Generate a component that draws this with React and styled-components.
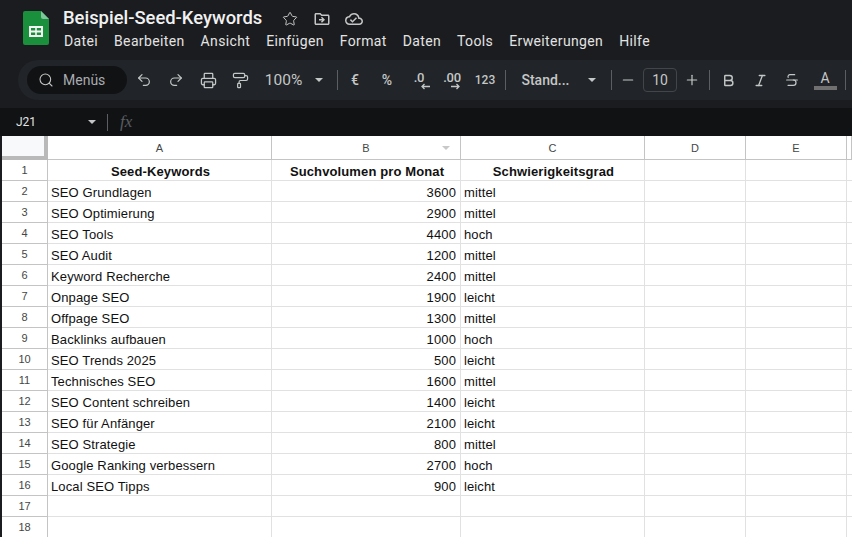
import React from 'react';
import styled, { createGlobalStyle } from 'styled-components';
import { MdOutlineDriveFileMove, MdOutlineCloudDone } from 'react-icons/md';
import {
	Star,
	Undo2,
	Redo2,
	Printer,
	PaintRoller,
	Search,
	Plus,
	Minus,
	Bold,
	Italic,
	Strikethrough,
} from 'lucide-react';

const GlobalStyle = createGlobalStyle`
	html, body {
		margin: 0;
		height: 100%;
		overflow: hidden;
		background: #1b1c1f;
	}
`;

const Page = styled.div`
	width: 852px;
	height: 537px;
	overflow: hidden;
	display: flex;
	flex-direction: column;
	background: #1b1c1f;
	font-family: Roboto, "Liberation Sans", sans-serif;
	color: #e3e3e3;
`;

const Header = styled.div`
	height: 60px;
	display: flex;
	flex-shrink: 0;
	padding-left: 23px;
	box-sizing: border-box;
`;

const Logo = styled.svg`
	width: 26px;
	height: 34px;
	margin-top: 11px;
`;

const HeaderText = styled.div`
	margin-left: 14px;
	display: flex;
	flex-direction: column;
`;

const TitleRow = styled.div`
	height: 24px;
	margin-top: 5px;
	display: flex;
	align-items: center;
`;

const Title = styled.div`
	font-size: 18.4px;
	font-weight: 500;
	color: #f1f1f1;
	width: 211px;
	white-space: nowrap;
`;

const TitleIcon = styled.span`
	width: 32px;
	margin-top: 3px;
	display: flex;
	justify-content: center;
	font-size: 18px;
	color: #c4c7c5;
`;

const Menu = styled.div`
	display: flex;
	gap: 16px;
	margin-top: 2px;
	font-size: 14px;
	line-height: 20px;
	letter-spacing: 0.36px;
	color: #e3e3e3;
	margin-left: 1px;
`;

const Toolbar = styled.div`
	height: 40px;
	margin-left: 18px;
	display: flex;
	align-items: center;
	flex-shrink: 0;
	background: #212429;
	border-radius: 20px 0 0 20px;
	padding-left: 9px;
	color: #c4c7c5;
`;

const SearchPill = styled.div`
	width: 100px;
	height: 28px;
	box-sizing: border-box;
	padding-left: 11px;
	margin-right: 1px;
	border-radius: 14px;
	background: #111214;
	display: flex;
	align-items: center;
	gap: 9px;
	font-size: 14px;
	color: #a9acb0;
	svg {
		color: #c4c7c5;
	}
`;

const ToolButton = styled.div`
	width: ${(p) => p.$w || 32}px;
	height: 28px;
	flex-shrink: 0;
	display: flex;
	align-items: center;
	justify-content: center;
	font-size: ${(p) => p.$size || 18}px;
	font-weight: ${(p) => p.$weight || 400};
	color: #c4c7c5;
`;

const Separator = styled.div`
	width: 1px;
	height: 20px;
	flex-shrink: 0;
	background: #5b5e62;
`;

const Caret = styled.span`
	width: 0;
	height: 0;
	border-left: 4.5px solid transparent;
	border-right: 4.5px solid transparent;
	border-top: 4.5px solid ${(p) => p.$color || '#c4c7c5'};
`;

const FontSizeBox = styled.div`
	width: 34px;
	height: 24px;
	box-sizing: border-box;
	flex-shrink: 0;
	display: flex;
	align-items: center;
	justify-content: center;
	border: 1px solid #42454a;
	border-radius: 4px;
	font-size: 14px;
	color: #c4c7c5;
`;

const Decimal = styled.span`
	position: relative;
	font-size: 13px;
	font-weight: 500;
	line-height: 13px;
	margin-top: -6px;
	letter-spacing: -0.3px;
`;

const DecimalArrow = styled.svg`
	position: absolute;
	top: 12px;
	right: ${(p) => p.$right}px;
	width: 10px;
	height: 7px;
`;

const TextColor = styled.div`
	display: flex;
	flex-direction: column;
	align-items: center;
	width: 24px;
	font-size: 14px;
	line-height: 15px;
	margin-top: 1px;
`;

const ColorBar = styled.div`
	width: 23px;
	height: 4px;
	margin-top: 0;
	background: #707070;
`;

const FormulaBar = styled.div`
	height: 28px;
	margin-top: 8px;
	flex-shrink: 0;
	display: flex;
	align-items: center;
	background: #111214;
	color: #c4c7c5;
	padding-left: 16px;
`;

const CellRef = styled.div`
	width: 72px;
	font-size: 12px;
	color: #e3e3e3;
`;

const FormulaDivider = styled.div`
	width: 1px;
	height: 17px;
	margin-left: 11px;
	margin-right: 12px;
	background: #5b5e62;
`;

const Fx = styled.div`
	font-family: "Liberation Serif", serif;
	font-style: italic;
	font-size: 17px;
	color: #5a5d61;
`;

const Sheet = styled.div`
	flex: 1;
	display: grid;
	grid-template-columns: 46px 224px 189px 184px 101px 101px 5px;
	grid-template-rows: 24px;
	grid-auto-rows: 21px;
	align-content: start;
	margin-left: 2px;
	background: #fff;
	font-family: "Liberation Sans", Arial, sans-serif;
`;

const Corner = styled.div`
	box-sizing: border-box;
	background: #f8f9fa;
	border-right: 4px solid #b9b9b9;
	border-bottom: 4px solid #b9b9b9;
`;

const ColumnHead = styled.div`
	position: relative;
	box-sizing: border-box;
	display: flex;
	align-items: center;
	justify-content: center;
	background: #fff;
	border-right: 1px solid #c4c4c4;
	border-bottom: 1px solid #c4c4c4;
	font-size: 11px;
	color: #444746;
`;

const FilterMark = styled.span`
	position: absolute;
	right: 10px;
	top: 10px;
	width: 0;
	height: 0;
	border-left: 4px solid transparent;
	border-right: 4px solid transparent;
	border-top: 4px solid #c8c8c8;
`;

const RowHead = styled.div`
	box-sizing: border-box;
	display: flex;
	align-items: center;
	justify-content: center;
	background: #fff;
	border-right: 1px solid #c4c4c4;
	border-bottom: 1px solid #c4c4c4;
	font-size: 11px;
	color: #444746;
`;

const Cell = styled.div`
	box-sizing: border-box;
	padding: ${(p) => (p.$align === 'center' ? '2px 2px 0 4px' : '2px 4px 0 3px')};
	display: flex;
	align-items: center;
	justify-content: ${(p) => (p.$align === 'center' ? 'center' : p.$align === 'right' ? 'flex-end' : 'flex-start')};
	border-right: 1px solid #e1e1e1;
	border-bottom: 1px solid #e1e1e1;
	font-size: 13px;
	font-weight: ${(p) => (p.$bold ? 700 : 400)};
	letter-spacing: 0.12px;
	color: #111;
	white-space: nowrap;
	overflow: hidden;
`;

const menuItems = ['Datei', 'Bearbeiten', 'Ansicht', 'Einfügen', 'Format', 'Daten', 'Tools', 'Erweiterungen', 'Hilfe'];

const rows = [
	['SEO Grundlagen', 3600, 'mittel'],
	['SEO Optimierung', 2900, 'mittel'],
	['SEO Tools', 4400, 'hoch'],
	['SEO Audit', 1200, 'mittel'],
	['Keyword Recherche', 2400, 'mittel'],
	['Onpage SEO', 1900, 'leicht'],
	['Offpage SEO', 1300, 'mittel'],
	['Backlinks aufbauen', 1000, 'hoch'],
	['SEO Trends 2025', 500, 'leicht'],
	['Technisches SEO', 1600, 'mittel'],
	['SEO Content schreiben', 1400, 'leicht'],
	['SEO für Anfänger', 2100, 'leicht'],
	['SEO Strategie', 800, 'mittel'],
	['Google Ranking verbessern', 2700, 'hoch'],
	['Local SEO Tipps', 900, 'leicht'],
	['', '', ''],
	['', '', ''],
];

const SheetsLogo = () => (
	<Logo viewBox="0 0 26 34">
		<path d="M2 0h16l8 8v24a2 2 0 0 1-2 2H2a2 2 0 0 1-2-2V2a2 2 0 0 1 2-2z" fill="#1a8f3c" />
		<path d="M18 0l8 8h-6a2 2 0 0 1-2-2z" fill="#7dc79a" />
		<path d="M6 15h14v11H6z" fill="#f4f4f4" />
		<path d="M8 17h4.2v2.6H8zM13.8 17H18v2.6h-4.2zM8 21.4h4.2V24H8zM13.8 21.4H18V24h-4.2z" fill="#1a8f3c" />
	</Logo>
);

const App = () => {
	return (
		<Page>
			<GlobalStyle />
			<Header>
				<SheetsLogo />
				<HeaderText>
					<TitleRow>
						<Title>Beispiel-Seed-Keywords</Title>
						<TitleIcon><Star size={16} strokeWidth={1.5} /></TitleIcon>
						<TitleIcon><MdOutlineDriveFileMove /></TitleIcon>
						<TitleIcon><MdOutlineCloudDone /></TitleIcon>
					</TitleRow>
					<Menu>
						{menuItems.map((item) => <span key={item}>{item}</span>)}
					</Menu>
				</HeaderText>
			</Header>
			<Toolbar>
				<SearchPill><Search size={16} strokeWidth={1.6} />Menüs</SearchPill>
				<ToolButton><Undo2 size={16} strokeWidth={1.8} /></ToolButton>
				<ToolButton><Redo2 size={16} strokeWidth={1.8} /></ToolButton>
				<ToolButton><Printer size={17} strokeWidth={1.8} /></ToolButton>
				<ToolButton><PaintRoller size={17} strokeWidth={1.7} /></ToolButton>
				<ToolButton $w={55} $size={15.5}>100%</ToolButton>
				<ToolButton $w={16}><Caret /></ToolButton>
				<ToolButton $w={10} />
				<Separator />
				<ToolButton $w={34} $size={14} $weight={500}>€</ToolButton>
				<ToolButton $w={30} $size={14} $weight={500}>%</ToolButton>
				<ToolButton $w={34}>
					<Decimal>
						.0
						<DecimalArrow $right={-6} viewBox="0 0 10 7">
							<path d="M10 3.5H2M4.5 1L2 3.5 4.5 6" fill="none" stroke="#c4c7c5" strokeWidth="1.3" />
						</DecimalArrow>
					</Decimal>
				</ToolButton>
				<ToolButton $w={32}>
					<Decimal>
						.00
						<DecimalArrow $right={0} viewBox="0 0 10 7">
							<path d="M0 3.5h8M5.5 1L8 3.5 5.5 6" fill="none" stroke="#c4c7c5" strokeWidth="1.3" />
						</DecimalArrow>
					</Decimal>
				</ToolButton>
				<ToolButton $w={34} $size={12} $weight={500}>123</ToolButton>
				<ToolButton $w={3} />
				<Separator />
				<ToolButton $w={79} $size={14} $weight={500}>Stand...</ToolButton>
				<ToolButton $w={14}><Caret /></ToolButton>
				<ToolButton $w={12} />
				<Separator />
				<ToolButton $w={31}><Minus size={16} strokeWidth={1.8} /></ToolButton>
				<FontSizeBox>10</FontSizeBox>
				<ToolButton $w={30}><Plus size={16} strokeWidth={1.8} /></ToolButton>
				<ToolButton $w={2} />
				<Separator />
				<ToolButton $w={36}><Bold size={15} strokeWidth={2.3} /></ToolButton>
				<ToolButton $w={28}><Italic size={15} strokeWidth={2.1} /></ToolButton>
				<ToolButton $w={36}><Strikethrough size={16} strokeWidth={1.8} /></ToolButton>
				<ToolButton $w={30}>
					<TextColor>
						A
						<ColorBar />
					</TextColor>
				</ToolButton>
				<ToolButton $w={5} />
				<Separator />
			</Toolbar>
			<FormulaBar>
				<CellRef>J21</CellRef>
				<Caret />
				<FormulaDivider />
				<Fx>fx</Fx>
			</FormulaBar>
			<Sheet>
				<Corner />
				<ColumnHead>A</ColumnHead>
				<ColumnHead>B<FilterMark /></ColumnHead>
				<ColumnHead>C</ColumnHead>
				<ColumnHead>D</ColumnHead>
				<ColumnHead>E</ColumnHead>
				<ColumnHead />

				<RowHead>1</RowHead>
				<Cell $bold $align="center">Seed-Keywords</Cell>
				<Cell $bold $align="center">Suchvolumen pro Monat</Cell>
				<Cell $bold $align="center">Schwierigkeitsgrad</Cell>
				<Cell />
				<Cell />
				<Cell />

				{rows.map((row, i) => (
					<React.Fragment key={i}>
						<RowHead>{i + 2}</RowHead>
						<Cell>{row[0]}</Cell>
						<Cell $align="right">{row[1]}</Cell>
						<Cell>{row[2]}</Cell>
						<Cell />
						<Cell />
						<Cell />
					</React.Fragment>
				))}
			</Sheet>
		</Page>
	);
};

export default App;
